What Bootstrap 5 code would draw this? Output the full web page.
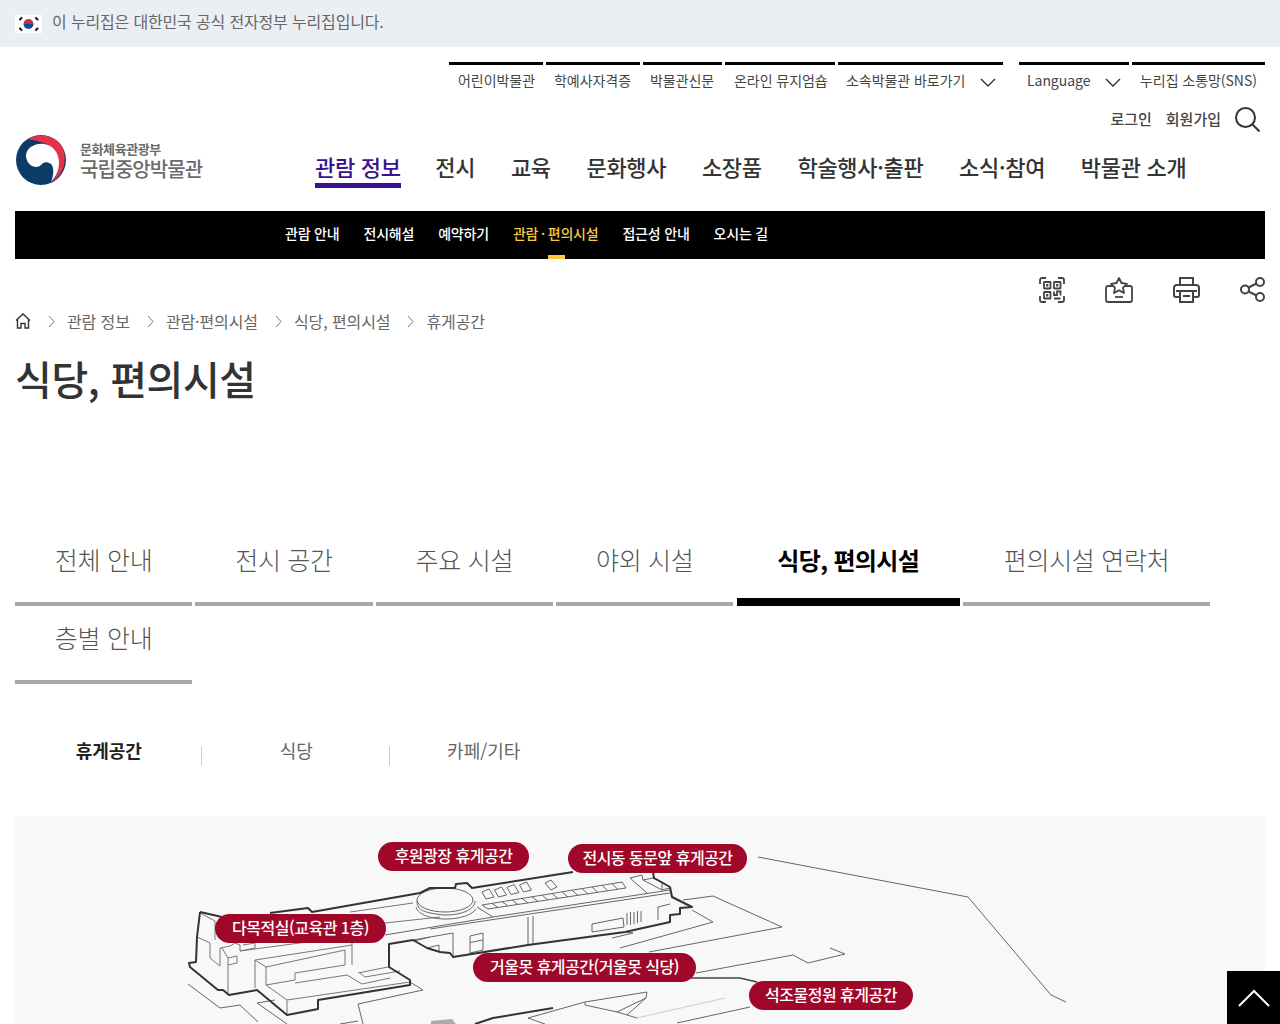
<!doctype html>
<html lang="ko">

<head>
    <meta charset="UTF-8">
    <meta name="viewport" content="width=device-width, initial-scale=1.0">
    <title>식당, 편의시설</title>
    <link href="https://cdn.jsdelivr.net/npm/bootstrap@5.3.0/dist/css/bootstrap.min.css" rel="stylesheet">
    <style>
        html, body { height: 1024px; overflow: hidden; }
        body { font-family: "Noto Sans CJK KR", "Noto Sans", sans-serif; color: #333; background: #fff; }
        a { color: inherit; text-decoration: none; }
        .gov-strip { height: 47px; background: #ebeff3; color: #666; font-size: 16px; padding-left: 15px; gap: 10px; letter-spacing: -.16px; }
        .gov-strip span { margin-bottom: 6px; }
        .site-wrap { padding: 0 15px; }
        .util-row { margin-top: 15px; height: 37px; gap: 3px; font-size: 14px; color: #444; }
        .util-item { border-top: 3px solid #000; padding: 5px 0 0 9px; gap: 15px; white-space: nowrap; letter-spacing: -.05px; }
        .util-item:nth-child(1), .util-item:nth-child(2) { width: 94px; }
        .util-item:nth-child(2) { padding-left: 8px; }
        .util-item:nth-child(3) { width: 79px; padding-left: 7px; }
        .util-item:nth-child(4) { width: 110px; }
        .util-item:nth-child(5) { width: 165px; padding-left: 8px; }
        .util-item:nth-child(6) { width: 110px; margin-left: 13px; padding-left: 8px; }
        .util-item:nth-child(7) { width: 133px; padding-left: 8px; }
        .login-row { height: 36px; gap: 14px; font-size: 15px; font-weight: 500; color: #444; padding-right: 5px; padding-top: 4px; }
        .logo-row { height: 76px; }
        .logo-box { width: 300px; gap: 13px; }
        .logo-txt { color: #6b6b6b; }
        .logo-txt b { display: block; }
        .logo-sup { font-size: 13px; line-height: 17px; letter-spacing: -.4px; font-weight: 700; }
        .logo-main { font-size: 20px; line-height: 23px; letter-spacing: -.95px; font-weight: 500; }
        .gnb { gap: 35.7px; font-size: 22px; font-weight: 500; color: #333; margin-top: 15px; letter-spacing: -.3px; }
        .gnb a { display: block; line-height: 32px; height: 38px; white-space: nowrap; }
        .gnb a.on { color: #3a1093; border-bottom: 5px solid #3a1093; margin-right: -1px; }
        .snb { height: 48px; background: #000; color: #fff; font-size: 14px; font-weight: 500; padding-left: 270px; gap: 24px; letter-spacing: -.2px; }
        .snb a { position: relative; line-height: 45px; }
        .snb a.on { color: #f8c93c; word-spacing: -1px; }
        .snb a.on::after { content: ""; position: absolute; left: 35px; bottom: 0; width: 17px; height: 4px; background: #f8c93c; }
        .tool-row { height: 43px; padding-top: 18px; gap: 40px; }
        .crumb-row { height: 38px; font-size: 16px; color: #666; letter-spacing: -.1px; }
        .crumb-row svg.chev { margin: 0 12px 0 17px; }
        .page-title { font-size: 40px; font-weight: 500; color: #333; height: 76px; line-height: 72px; margin: 0; letter-spacing: -.4px; padding-top: 2px; }
        .tab-wrap { margin-top: 112px; gap: 0 3.2px; }
        .tab-cell { flex: 0 0 auto; width: 177.2px; height: 78px; border-bottom: 4px solid #a9a9a9; font-size: 25px; font-weight: 300; color: #555; line-height: 62px; text-align: center; letter-spacing: -.3px; }
        .tab-cell.wide { width: 223.4px; }
        .tab-cell.wider { width: 247px; }
        .tab-cell.on { border-bottom: 8px solid #000; color: #000; font-weight: 700; font-size: 24px; letter-spacing: -.65px; line-height: 64px; }
        .sub-wrap { margin-top: 47px; height: 40px; }
        .sub-cell { width: 187.5px; text-align: center; font-size: 18px; color: #666; line-height: 38px; position: relative; }
        .sub-cell.on { color: #222; font-weight: 700; }
        .sub-cell + .sub-cell::before { content: ""; position: absolute; left: -1.5px; top: 15px; height: 20px; width: 1px; background: #ccc; }
        .map-box { margin-top: 45px; height: 208px; background: #f8f8f8; position: relative; overflow: hidden; }
        .map-box svg { display: block; }
        .map-tag { position: absolute; height: 29px; line-height: 26px; border-radius: 15px; background: #a0082a; color: #fff; font-size: 16px; font-weight: 500; text-align: center; white-space: nowrap; letter-spacing: -.5px; }
        .top-btn { position: fixed; right: 0; bottom: 0; width: 53px; height: 53px; background: #000; }
    </style>
</head>

<body>
    <div class="gov-strip d-flex align-items-center">
        <svg width="27" height="18" viewBox="0 0 27 18">
            <rect width="27" height="18" fill="#fff"/>
            <path d="M8.500 9a5 5 0 0 1 10 0z" fill="#cd2e3a"/>
            <path d="M8.500 9a5 5 0 0 0 10 0z" fill="#0f4a9c"/>
            <g stroke="#222" stroke-width="2.200" stroke-linecap="round">
                <path d="M5 4.500l1.500-1.500M21 3l1.500 1.500M5 13.500l1.500 1.500M21 15l1.500-1.500"/>
            </g>
        </svg>
        <span>이 누리집은 대한민국 공식 전자정부 누리집입니다.</span>
    </div>

    <div class="site-wrap">
        <div class="util-row d-flex justify-content-end">
            <a href="#" class="util-item">어린이박물관</a>
            <a href="#" class="util-item">학예사자격증</a>
            <a href="#" class="util-item">박물관신문</a>
            <a href="#" class="util-item">온라인 뮤지엄숍</a>
            <a href="#" class="util-item d-flex align-items-start">소속박물관 바로가기
                <svg class="mt-2" width="16" height="9" viewBox="0 0 16 9"><path d="M1 1l7 7 7-7" fill="none" stroke="#333" stroke-width="1.400"/></svg>
            </a>
            <a href="#" class="util-item d-flex align-items-start">Language
                <svg class="mt-2" width="16" height="9" viewBox="0 0 16 9"><path d="M1 1l7 7 7-7" fill="none" stroke="#333" stroke-width="1.400"/></svg>
            </a>
            <a href="#" class="util-item">누리집 소통망(SNS)</a>
        </div>

        <div class="login-row d-flex justify-content-end align-items-center">
            <a href="#">로그인</a>
            <a href="#">회원가입</a>
            <svg width="25" height="25" viewBox="0 0 25 25" fill="none" stroke="#333" stroke-width="2">
                <circle cx="10.500" cy="10.500" r="9.500"/>
                <path d="M17.500 17.500l7 7"/>
            </svg>
        </div>

        <div class="logo-row d-flex align-items-start">
            <a href="#" class="logo-box d-flex align-items-center">
                <svg width="52" height="50" viewBox="0 0 52 50">
                    <circle cx="26" cy="25" r="25" fill="#0c3b68"/>
                    <path d="M13 4C20-1 38-2 46 10c6 10 6 26-9 38 7-10 9-24 3-32C32 6 20 6 13 4z" fill="#e5324a"/>
                    <path d="M11 21c0-8 9-13 18-12 9 1 15 9 15 19 0 8-4 15-8 19 3-7 3-15 0-18-4-3-8-2-10 1-4 4-14 2-15-9z" fill="#fff"/>
                </svg>
                <span class="logo-txt">
                    <b class="logo-sup">문화체육관광부</b>
                    <b class="logo-main">국립중앙박물관</b>
                </span>
            </a>
            <nav class="gnb d-flex">
                <a href="#" class="on">관람 정보</a>
                <a href="#">전시</a>
                <a href="#">교육</a>
                <a href="#">문화행사</a>
                <a href="#">소장품</a>
                <a href="#">학술행사·출판</a>
                <a href="#">소식·참여</a>
                <a href="#">박물관 소개</a>
            </nav>
        </div>

        <nav class="snb d-flex">
            <a href="#">관람 안내</a>
            <a href="#">전시해설</a>
            <a href="#">예약하기</a>
            <a href="#" class="on">관람 · 편의시설</a>
            <a href="#">접근성 안내</a>
            <a href="#">오시는 길</a>
        </nav>

        <div class="tool-row d-flex justify-content-end">
            <svg width="26" height="26" viewBox="0 0 26 26" fill="none" stroke="#444" stroke-width="1.800">
                <path d="M1 7V3a2 2 0 0 1 2-2h4M19 1h4a2 2 0 0 1 2 2v4M1 19v4a2 2 0 0 0 2 2h4M25 19v4a2 2 0 0 1-2 2h-4"/>
                <rect x="5" y="5" width="6.500" height="6.500" rx=".5"/><rect x="15" y="5" width="6.500" height="6.500" rx=".5"/>
                <rect x="5" y="15" width="6.500" height="6.500" rx=".5"/>
                <path d="M15 14.500v3.500h3v-3.500h3.500v4M15 21.500h6.500"/>
                <path d="M8.200 7v2.500M18.200 7v2.500M8.200 17v2.500" stroke-width="2.200"/>
            </svg>
            <svg width="28" height="26" viewBox="0 0 28 26" fill="none" stroke="#444" stroke-width="1.800" stroke-linejoin="round">
                <path d="M8 9H3a2 2 0 0 0-2 2v12a2 2 0 0 0 2 2h22a2 2 0 0 0 2-2V11a2 2 0 0 0-2-2h-5"/>
                <path d="M14 1l2.500 5 5.500.8-4 3.800 1 5.400-5-2.600-5 2.600 1-5.400-4-3.800 5.500-.8z"/>
                <path d="M10 20h8"/>
            </svg>
            <svg width="27" height="26" viewBox="0 0 27 26" fill="none" stroke="#444" stroke-width="2">
                <path d="M7 8V1h13v7"/>
                <path d="M6 20H3a2 2 0 0 1-2-2v-7a3 3 0 0 1 3-3h19a3 3 0 0 1 3 3v7a2 2 0 0 1-2 2h-3"/>
                <path d="M3 14h21"/>
                <rect x="7" y="14" width="13" height="11"/>
                <path d="M10 19h7"/>
            </svg>
            <svg width="25" height="25" viewBox="0 0 25 25" fill="none" stroke="#444" stroke-width="2">
                <circle cx="20" cy="5" r="4"/><circle cx="5" cy="12.500" r="4"/><circle cx="20" cy="20" r="4"/>
                <path d="M8.500 10.500l8-4M8.500 14.500l8 4"/>
            </svg>
        </div>

        <div class="crumb-row d-flex align-items-center">
            <svg width="16" height="16" viewBox="0 0 16 16" fill="none" stroke="#333" stroke-width="1.400">
                <path d="M1 7.500L8 1l7 6.500M2.500 6.500V15H6v-4.500h4V15h3.500V6.500"/>
            </svg>
            <svg class="chev" width="7" height="13" viewBox="0 0 7 13"><path d="M1 1l5 5.500L1 12" fill="none" stroke="#777"/></svg>
            <span>관람 정보</span>
            <svg class="chev" width="7" height="13" viewBox="0 0 7 13"><path d="M1 1l5 5.500L1 12" fill="none" stroke="#777"/></svg>
            <span>관람·편의시설</span>
            <svg class="chev" width="7" height="13" viewBox="0 0 7 13"><path d="M1 1l5 5.500L1 12" fill="none" stroke="#777"/></svg>
            <span>식당, 편의시설</span>
            <svg class="chev" width="7" height="13" viewBox="0 0 7 13"><path d="M1 1l5 5.500L1 12" fill="none" stroke="#777"/></svg>
            <span>휴게공간</span>
        </div>

        <h1 class="page-title">식당, 편의시설</h1>

        <div class="tab-wrap d-flex flex-wrap">
            <a href="#" class="tab-cell">전체 안내</a>
            <a href="#" class="tab-cell">전시 공간</a>
            <a href="#" class="tab-cell">주요 시설</a>
            <a href="#" class="tab-cell">야외 시설</a>
            <a href="#" class="tab-cell wide on">식당, 편의시설</a>
            <a href="#" class="tab-cell wider">편의시설 연락처</a>
            <a href="#" class="tab-cell">층별 안내</a>
        </div>

        <div class="sub-wrap d-flex">
            <a href="#" class="sub-cell on">휴게공간</a>
            <a href="#" class="sub-cell">식당</a>
            <a href="#" class="sub-cell">카페/기타</a>
        </div>

        <div class="map-box">
            <svg width="1250" height="208" viewBox="15 816 1250 208" fill="none">
                <!-- site lines around the building -->
                <g stroke="#666" stroke-width="1">
                    <path d="M758 857L968 897 1051 995 1066 1002"/>
                    <path d="M683 900L713 896 782 927 649 952"/>
                    <path d="M692 910L713 922 620 948"/>
                    <path d="M696 973L793 955 808 963 845 954 830 948"/>
                    <path d="M637 1018L725 998" stroke="#ccc"/>
                    <path d="M677 1023L750 1007"/>
                    <path d="M188 984L220 1008 240 1005 258 1022"/>
                    <path d="M257 1003L287 1024M257 1003L275 1000"/>
                    <path d="M410 982L423 990 358 1004 363 1024M340 1024L358 1021"/>
                    <path d="M528 1018L585 1002 647 992 646 998 617 1012 585 1005 585 1002M528 1018L545 1024M617 1012L637 1018M646 998L627 1015"/>
                </g>
                <!-- west wing -->
                <g stroke="#777" stroke-width="1">
                    <path d="M200 913L215 921 215 940"/>
                    <path d="M197 937L210 943 210 958 220 966 220 948 230 946 235 943 240 945 240 951 255 948 255 943 243 945"/>
                    <path d="M222 948L228 958 228 995M228 958L237 956 237 963 228 965"/>
                    <path d="M240 951L352 936 352 965"/>
                    <path d="M255 960L255 988M255 960L352 945M255 960L266 967 266 985M266 967L345 950 345 965"/>
                    <path d="M266 985L295 980 295 973 345 965M295 983L347 975 362 984 390 978M360 973L365 977 400 971M358 973L388 967"/>
                    <path d="M266 985L287 1000 287 1015M287 1000L410 982"/>
                    <path d="M350 912L413 903M385 923L440 917"/>
                </g>
                <!-- main block -->
                <g stroke="#666" stroke-width="1">
                    <ellipse cx="445" cy="900" rx="28" ry="12"/>
                    <path d="M417 901c0 7 3 12 28 14 18 0 30-6 30-14"/>
                    <path d="M416 907c2 8 16 12 30 12 14 0 26-4 30-10"/>
                    <path d="M477 907L493 917 670 890"/>
                    <path d="M385 935L493 917M430 929L670 893"/>
                    <path d="M482 892L489 889 494 897 486 899zM494.500 890L501.500 887 506.500 895 498.500 897zM507 887.500L514 884.500 519 892.500 511 894.500zM519.500 885L526.500 882 531.500 890 523.500 892zM545 883L551 880 557 887 551 890z"/>
                    <path d="M482 905L622 882 626 888 488 909z"/>
                    <path d="M492 903.400L498 907.500M502 901.700L508 906M512 900L518 904.500M522 898.400L528 903M532 896.800L538 901.500M542 895.100L548 900M552 893.500L558 898.500M562 891.900L568 897M572 890.200L578 895.500M582 888.600L588 894M592 887L598 892.500M602 885.300L608 891M612 883.700L618 889.500"/>
                    <path d="M528 917L528 945M533 916L533 944"/>
                    <path d="M453 933L453 957M413 940L453 933"/>
                    <path d="M427 948L439 945 439 952M414 941L430 937"/>
                    <path d="M470 936L483 933 483 950 470 953zM470 942.500L483 940"/>
                    <path d="M592 924L623 918 624 927 592 932z"/>
                    <path d="M627 913V925M630.500 912V925M634 912V924M637.500 911V923M641 911V922"/>
                    <path d="M658 907L670 904M658 907V920"/>
                    <path d="M630 878L642 875 643 880 662 890 670 888M630 878L647 893M643 880L653 878 662 882 662 890"/>
                    <path d="M625 932L633 933 612 938"/>
                </g>
                <!-- heavy outline -->
                <g stroke="#333" stroke-width="2" stroke-linejoin="round">
                    <path d="M200 912L222 917M270 913L308 908 312 912 420 893 430 888 455 888 456 884 467 883 472 888 573 872"/>
                    <path d="M200 912L197 937 196 962 189 963 190 967 218 990 223 990 229 995 257 990 287 1015 318 1009 318 1000 410 985 410 980 389 967 389 944 413 940 427 948 440 952 450 953 453 957 528 945 625 932 670 922 670 915 680 914 680 908 692 907 672 897 670 887 654 878 653 872"/>
                    <path d="M475 1024L493 1018 553 1008"/>
                </g>
                <path d="M683 978L740 978 757 982" stroke="#444" stroke-width="1.500"/>
                <path d="M431 1024V1021L452 1019 456 1024z" fill="#aaa"/>
            </svg>
            <span class="map-tag" style="left:363px;top:26px;width:151px">후원광장 휴게공간</span>
            <span class="map-tag" style="left:553px;top:28px;width:179px">전시동 동문앞 휴게공간</span>
            <span class="map-tag" style="left:200px;top:98px;width:171px">다목적실(교육관 1층)</span>
            <span class="map-tag" style="left:458px;top:137px;width:223px">거울못 휴게공간(거울못 식당)</span>
            <span class="map-tag" style="left:734px;top:165px;width:164px">석조물정원 휴게공간</span>
        </div>
    </div>

    <a href="#" class="top-btn d-flex align-items-center justify-content-center">
        <svg width="32" height="18" viewBox="0 0 32 18"><path d="M1 17L16 2l15 15" fill="none" stroke="#fff" stroke-width="2"/></svg>
    </a>

    <script src="https://cdn.jsdelivr.net/npm/bootstrap@5.3.0/dist/js/bootstrap.bundle.min.js"></script>
</body>

</html>
